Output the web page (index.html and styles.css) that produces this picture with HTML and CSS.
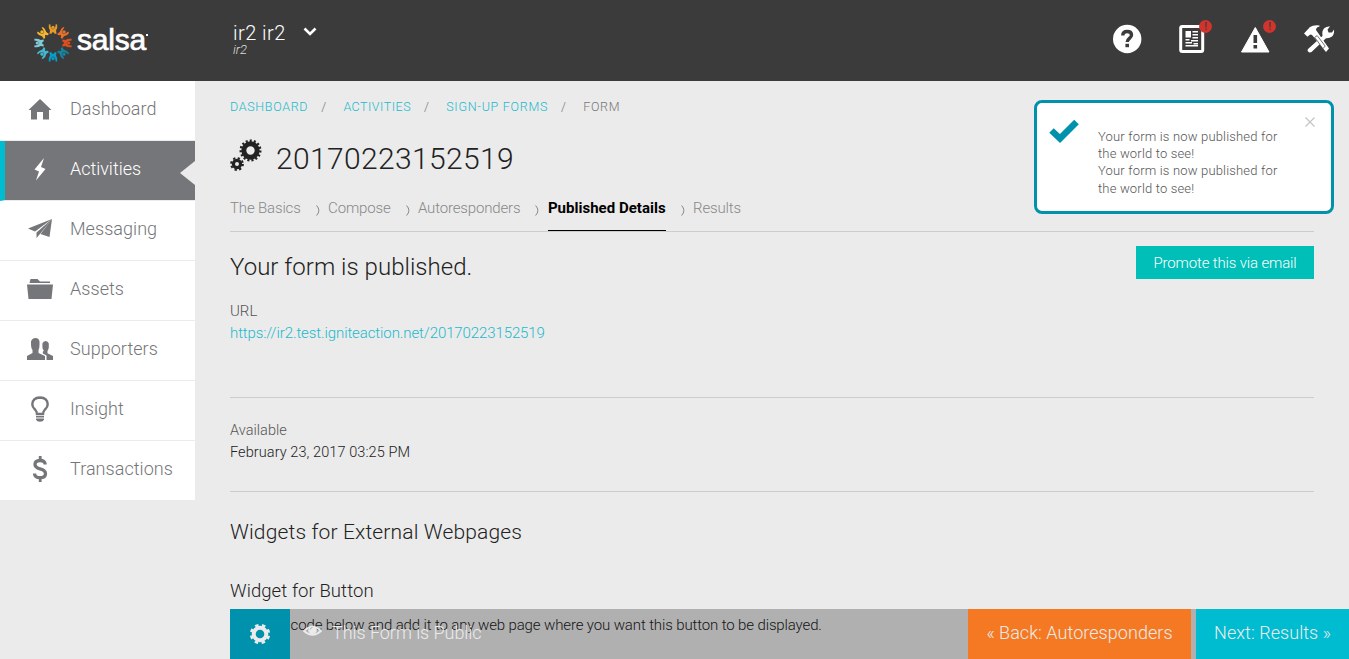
FILE: index.html
```html
<!DOCTYPE html>
<html lang="en">
<head>
<meta charset="utf-8">
<title>20170223152519</title>
<link rel="stylesheet" href="styles.css">
</head>
<body>
<svg width="0" height="0" class="defs" aria-hidden="true">
  <defs>
    <g id="person">
      <circle cx="0" cy="-15.700" r="1.600"/>
      <path d="M-4.200 -18.500 L-2.600 -18.800 Q-2.800 -15 0 -13.600 Q2.800 -15 2.600 -18.800 L4.200 -18.500 Q4.800 -14.500 3 -12.500 L3.600 -9.300 L1.700 -9.300 L0 -11.300 L-1.700 -9.300 L-3.600 -9.300 L-3 -12.500 Q-4.800 -14.500 -4.200 -18.500 Z"/>
    </g>
  </defs>
</svg>
<header class="topbar">
  <div class="brand">
    <svg class="brand-ring" viewBox="-20 -20 40 40">
      <use href="#person" fill="#e99a2b"/>
      <use href="#person" fill="#e8702a" transform="rotate(45)"/>
      <use href="#person" fill="#d9501e" transform="rotate(90)"/>
      <use href="#person" fill="#1683a0" transform="rotate(135)"/>
      <use href="#person" fill="#0a9cc4" transform="rotate(180)"/>
      <use href="#person" fill="#43b7cf" transform="rotate(225)"/>
      <use href="#person" fill="#7fcbd6" transform="rotate(270)"/>
      <use href="#person" fill="#f5b52c" transform="rotate(315)"/>
    </svg>
    <span class="brand-name">salsa</span><span class="brand-dot"></span>
  </div>
  <div class="account">
    <div class="account-row"><span class="account-name">ir2 ir2</span>
      <svg class="chev" viewBox="0 0 14 10"><path d="M1.500 1.500l5.500 5.500 5.500-5.500" fill="none" stroke="#fff" stroke-width="2.600"/></svg>
    </div>
    <div class="account-org">ir2</div>
  </div>
  <nav class="tools">
    <span class="tool"><svg width="30" height="30" viewBox="0 0 30 30"><circle cx="15.200" cy="15" r="14.200" fill="#fff"/><path d="M10.800 11.600C10.800 8.500 12.700 7.500 15.200 7.500c2.700 0 4.300 1.400 4.300 3.500 0 3.400-4.300 3.300-4.300 7" fill="none" stroke="#3b3b3b" stroke-width="3.400"/><rect x="13.400" y="19.800" width="3.600" height="3.400" fill="#3b3b3b"/></svg></span>
    <span class="tool"><svg width="30" height="30" viewBox="0 0 30 30"><rect x="4.700" y="2.500" width="22" height="25" rx="1.500" fill="none" stroke="#fff" stroke-width="3"/><path d="M9.500 7h5.500v6.500H9.500zM16.500 7h5.500v1.500H16.500zM16.500 10h5.500v1.500H16.500zM16.500 13h5.500v1.500H16.500zM9.500 15h4v1.500H9.500zM15 16h7v1.600h-7zM9.500 18h6.500v1.600H9.500zM17.500 19h4.500v1.500H17.500zM9.500 21h12.500v1.500H9.500z" fill="#fff"/></svg><i class="badge">!</i></span>
    <span class="tool"><svg width="30" height="30" viewBox="0 0 30 30"><path d="M15.300 3.500L29 28H1.500z" fill="#fff" stroke="#fff" stroke-width="1" stroke-linejoin="round"/><path d="M13.500 11h3.600v8h-3.600zM13.500 21h3.600v3.500h-3.600z" fill="#3b3b3b"/></svg><i class="badge">!</i></span>
    <span class="tool"><svg width="32" height="30" viewBox="0 0 32 30" fill="#fff"><path d="M1 9.500L7 3Q10 .800 16.500 1.400L16.500 2.500Q13 3 13 6L26 24.500 23 28 9.500 11.500Q8 10 6.500 11L4.500 12.700z"/><path d="M5 25L19.500 12Q18.500 6.500 21.500 4 24 2 27 2.500L24.500 5.500 25.500 8.500l3.500 0L31 5.500Q31.500 10 29 12.500 26.500 14.500 23 14.200L8.500 28Q6.500 29 5 27.500 4 26.200 5 25z"/><path d="M11.700 13.300l2.500-1.700 8 10.500-2.300 2.500z" stroke="#3b3b3b" stroke-width=".7"/></svg></span>
  </nav>
</header>
<div class="layout">
  <aside class="sidebar">
    <a class="item"><svg viewBox="0 0 26 26"><path d="M13 3L24.500 14H22v9.500h-6V16h-6v7.500H4V14H1.500z"/></svg><span>Dashboard</span></a>
    <a class="item active"><svg viewBox="0 0 26 26"><path d="M17 2L7.500 13.500l4.500 2L9 24.500 18.500 13l-4.500-2z"/></svg><span>Activities</span></a>
    <a class="item"><svg viewBox="0 0 26 26"><path d="M25 3L1 12.500l7 3zM25 3L9.500 16.500v5.500l3-3.500zM25 3L13.500 18l9 3z"/></svg><span>Messaging</span></a>
    <a class="item"><svg viewBox="0 0 26 26"><path d="M2.500 7L3.500 3h7L13 5.500h10V7zM0 8.500h26L24.500 23h-23z"/></svg><span>Assets</span></a>
    <a class="item"><svg viewBox="0 0 26 26"><path d="M0 24v-4L5.500 17v-3Q4 12 4 9V5.500Q5 2 8.500 2t4 3.500V9Q12.500 12 11.500 14v3L18 20v4z"/><path d="M19.500 24V19.500L15.800 17.500v-1.500l1-1.500q-1.400-1.500-1.400-3.500V7.500q.8-2.500 3.200-2.500t3.200 2.500V11q0 2.500-1.300 4v2.200L26 20v4z"/></svg><span>Supporters</span></a>
    <a class="item"><svg viewBox="0 0 26 26"><path d="M10 18Q10 15.500 8 13.500 5.300 11 5.300 8.500 5.500 1.700 13 1.500q7.500.2 7.700 7 0 2.500-2.700 5-2 2-2 4.500z" fill="none" stroke="#757679" stroke-width="2.400"/><path d="M9 20h8v1.500H9zM9 22.500h8v1.200q-1 2-4 2t-4-2z"/></svg><span>Insight</span></a>
    <a class="item"><svg viewBox="0 0 26 26"><path d="M18.200 8.500Q18 4.500 13 4.500 8 4.600 8 8.500q0 3 5 4.300 5.500 1.400 5.500 4.900 0 4-5.500 4Q7.700 21.700 7.500 17.500" fill="none" stroke="#757679" stroke-width="3.300"/><path d="M11.800 0h2.800v5h-2.800zM11.800 21h2.800v5h-2.800z"/></svg><span>Transactions</span></a>
  </aside>
  <main class="content">
    <nav class="crumbs"><a>DASHBOARD</a><i>/</i><a class="c2">ACTIVITIES</a><i>/</i><a class="c3">SIGN-UP FORMS</a><i>/</i><span>FORM</span></nav>
    <div class="title">
      <svg width="32" height="34" viewBox="0 0 32 34" fill="none" stroke="#222">
        <circle cx="20.500" cy="12.500" r="6.700" stroke-width="5"/><circle cx="20.500" cy="12.500" r="9.800" stroke-width="2.400" stroke-dasharray="2.050 2.050"/>
        <circle cx="7" cy="26" r="3.600" stroke-width="3.200"/><circle cx="7" cy="26" r="5.900" stroke-width="2" stroke-dasharray="2.300 2.330"/>
      </svg>
      <h1>20170223152519</h1>
    </div>
    <nav class="steps"><a>The Basics</a><svg viewBox="0 0 4 11"><path d="M.6.500Q5.200 5.500.6 10.500"/></svg><a>Compose</a><svg viewBox="0 0 4 11"><path d="M.6.500Q5.200 5.500.6 10.500"/></svg><a>Autoresponders</a><svg viewBox="0 0 4 11"><path d="M.6.500Q5.200 5.500.6 10.500"/></svg><a class="current">Published Details</a><svg viewBox="0 0 4 11"><path d="M.6.500Q5.200 5.500.6 10.500"/></svg><a>Results</a></nav>
    <section class="published">
      <div class="lead"><h2>Your form is published.</h2><button class="promote">Promote this via email</button></div>
      <div class="label">URL</div>
      <a class="url">https://ir2.test.igniteaction.net/20170223152519</a>
    </section>
    <section class="available">
      <div class="label">Available</div>
      <div class="value">February 23, 2017 03:25 PM</div>
    </section>
    <section class="widgets">
      <h3>Widgets for External Webpages</h3>
      <h4>Widget for Button</h4>
      <p>Copy the code below and add it to any web page where you want this button to be displayed.</p>
    </section>
  </main>
</div>
<div class="notice">
  <svg class="check" viewBox="0 0 30 24"><path d="M2.500 11.500l8.500 8L27.500 3" fill="none" stroke="#0091ac" stroke-width="6.500"/></svg>
  <div class="notice-text">Your form is now published for<br>the world to see!<br>Your form is now published for<br>the world to see!</div>
  <svg class="close" viewBox="0 0 10 10"><path d="M.5.5l9 9M9.500.5l-9 9" stroke="#c4c4c4" stroke-width="1.200"/></svg>
</div>
<footer class="actionbar">
  <div class="gear"><svg width="22" height="22" viewBox="-11 -11 22 22"><circle r="6.300" fill="none" stroke="#ebebeb" stroke-width="4"/><circle r="8.900" fill="none" stroke="#ebebeb" stroke-width="2.600" stroke-dasharray="3.500 3.490" stroke-dashoffset="-1.750"/></svg></div>
  <div class="status"><svg width="19" height="14" viewBox="0 0 19 14"><path d="M1 7Q9.500-1.500 18 7 9.500 14.500 1 7z" fill="none" stroke="#ebebeb" stroke-width="1.700"/><circle cx="9.500" cy="6" r="4.300" fill="#ebebeb"/><path d="M7.300 5.500q.2-2 2.200-2.200" stroke="#b0b0b0" fill="none"/></svg><span>This Form is Public</span></div>
  <a class="back">« Back: Autoresponders</a>
  <a class="next">Next: Results »</a>
</footer>
</body>
</html>
```
FILE: styles.css
```css
* { box-sizing: border-box; }
body { margin: 0; height: 659px; overflow: hidden; background: #ebebeb; font-family: Roboto, "Liberation Sans", sans-serif; font-weight: 300; color: #222; position: relative; }
h1, h2, h3, h4, p { margin: 0; font-weight: 300; white-space: nowrap; }
i { font-style: normal; }
.defs { position: absolute; }

.topbar { height: 81px; background: #3b3b3b; display: flex; color: #fff; }
.brand { width: 233px; padding: 23px 0 0 33px; display: flex; }
.brand-ring { width: 40px; height: 40px; flex: none; }
.brand-name { font-family: "Liberation Sans", sans-serif; font-weight: 400; font-size: 30px; line-height: 34px; margin-left: 4px; letter-spacing: -.2px; -webkit-text-stroke: .7px #fff; }
.brand-dot { width: 2px; height: 2px; background: #fff; margin-top: 11px; }
.account { flex: 1; padding-top: 21px; }
.account-row { display: flex; height: 23px; }
.account-name { font-size: 20px; line-height: 24px; letter-spacing: .45px; }
.chev { width: 14px; height: 10px; margin: 6px 0 0 17px; }
.account-org { font-size: 13px; line-height: 12px; font-style: italic; color: #ddd; }
.tools { display: flex; gap: 34px; padding: 24px 14px 0 0; }
.tool { position: relative; width: 30px; height: 30px; }
.tool:last-child { width: 32px; margin-left: -1px; }
.tool svg { display: block; }
.badge { position: absolute; right: -6px; top: -4px; width: 13px; height: 13px; border-radius: 50%; background: #d0342c; color: #3b3b3b; font-size: 10px; line-height: 13px; text-align: center; font-weight: 500; }

.layout { display: flex; }
.sidebar { width: 195px; flex: none; }
.item { display: flex; height: 60px; background: #fff; border-bottom: 1px solid #ebebeb; padding: 15px 0 0 27px; color: #757679; font-size: 18px; line-height: 26px; letter-spacing: .05px; position: relative; }
.item:last-child { height: 59px; border: 0; }
.item svg { width: 26px; height: 26px; fill: #757679; margin-right: 17px; flex: none; overflow: visible; }
.active { background: #757679; color: #fff; border-left: 5px solid #00bcd0; padding-left: 22px; letter-spacing: -.03px; }
.active svg { fill: #fff; }
.active::after { content: ""; position: absolute; right: 0; top: 20px; border: solid transparent; border-width: 12px 15px 12px 0; border-right-color: #ebebeb; }

.content { flex: 1; padding: 16px 35px 0; height: 578px; overflow: hidden; }
.crumbs { height: 19px; line-height: 19px; font-size: 12.500px; letter-spacing: .68px; display: flex; color: #757679; }
.crumbs a, .url { color: #1bb9cb; }
.crumbs .c2 { letter-spacing: .5px; }
.crumbs .c3 { letter-spacing: .73px; }
.crumbs i { margin: 0 17px 0 13px; letter-spacing: .2px; }
.title { display: flex; height: 82px; padding-top: 20px; }
.title svg { margin-top: 2px; }
.title h1 { font-size: 30px; line-height: 45px; margin-left: 14px; letter-spacing: .35px; }
.steps { display: flex; height: 34px; border-bottom: 1px solid #ccc; font-size: 15px; line-height: 20px; color: #888; letter-spacing: -.15px; }
.steps a { height: 33px; }
.steps svg { width: 4px; height: 11px; margin: 7px 8.400px 0 15px; fill: none; stroke: #888; }
.steps .current { font-weight: 700; color: #000; border-bottom: 1px solid #000; letter-spacing: .02px; }
.published { height: 166px; padding-top: 14px; border-bottom: 1px solid #ccc; }
.lead { display: flex; justify-content: space-between; }
.lead h2 { font-size: 24px; line-height: 42px; letter-spacing: .03px; }
.promote { width: 178px; height: 33px; border: 0; background: #00bfb8; color: #fff; font: 300 15px/33px Roboto, sans-serif; padding: 1px 0 0; letter-spacing: -.15px; }
.label { font-size: 15px; line-height: 22px; color: #555; margin-top: 12px; }
.url { font-size: 15px; line-height: 22px; display: block; letter-spacing: -.1px; }
.available { height: 94px; padding-top: 9px; border-bottom: 1px solid #ccc; }
.available .label { font-size: 14.500px; margin-top: 13px; letter-spacing: .05px; }
.value { font-size: 14.500px; line-height: 22px; letter-spacing: .08px; }
.widgets h3 { font-size: 21px; line-height: 30px; margin-top: 25px; letter-spacing: .15px; }
.widgets h4 { font-size: 18.500px; line-height: 26px; margin-top: 31px; letter-spacing: .08px; }
.widgets p { font-size: 15px; line-height: 20px; margin-top: 11px; letter-spacing: -.125px; }

.notice { position: absolute; left: 1034px; top: 100px; width: 300px; height: 114px; background: #fff; border: 3px solid #0091ac; border-radius: 8px; display: flex; }
.check { width: 30px; height: 24px; margin: 16px 19px 0 12px; overflow: visible; }
.notice-text { font-size: 13px; line-height: 17.300px; color: #555; padding-top: 24.800px; width: 207px; letter-spacing: .17px; white-space: nowrap; }
.close { width: 10px; height: 10px; margin-top: 14px; }

.actionbar { position: absolute; left: 230px; top: 609px; width: 1119px; height: 50px; background: rgba(0, 0, 0, .25); display: flex; font-size: 18px; line-height: 48px; color: #ebebeb; }
.gear { width: 60px; background: #0091ac; display: flex; align-items: center; justify-content: center; }
.status { flex: 1; display: flex; padding-left: 13px; }
.status svg { margin: 15px 10px 0 0; }
.status span { letter-spacing: -.05px; }
.back { width: 223px; background: #f47922; text-align: center; margin-right: 5px; letter-spacing: .05px; }
.next { width: 153px; background: #00bcd0; text-align: center; letter-spacing: .05px; }
```
